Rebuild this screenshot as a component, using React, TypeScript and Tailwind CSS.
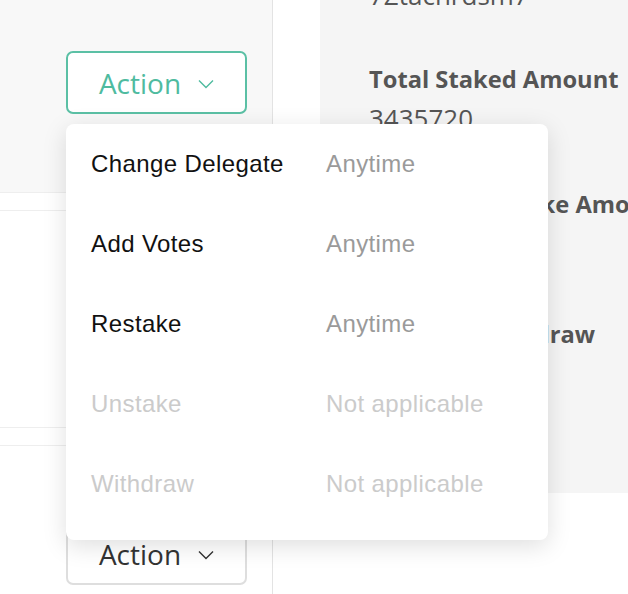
import React from "react";

const items = [
  { label: "Change Delegate", when: "Anytime", enabled: true },
  { label: "Add Votes", when: "Anytime", enabled: true },
  { label: "Restake", when: "Anytime", enabled: true },
  { label: "Unstake", when: "Not applicable", enabled: false },
  { label: "Withdraw", when: "Not applicable", enabled: false },
];

function Chevron({ className }: { className: string }) {
  return (
    <svg viewBox="0 0 16 10" className={className} fill="none" stroke="currentColor" strokeWidth="1.4">
      <path d="M1 1.5 L8 8.5 L15 1.5" />
    </svg>
  );
}

function ActionButton({ active }: { active?: boolean }) {
  return (
    <button
      className={
        active
          ? "flex h-[63px] w-[181px] items-center justify-center gap-[17px] rounded-[7px] border-2 border-[#5bc0a5] bg-white text-[#4fbb9f]"
          : "flex h-[63px] w-[181px] items-center justify-center gap-[17px] rounded-[7px] border-2 border-[#dedede] bg-white text-[#333]"
      }
    >
      <span className="font-['Open_Sans',sans-serif] text-[28px] leading-none">Action</span>
      <Chevron className="mt-[2px] h-[10px] w-[16px]" />
    </button>
  );
}

function Card({ active, first }: { active?: boolean; first?: boolean }) {
  return (
    <div
      className={
        (first ? "-mt-[25px] " : "mt-[17px] border-t border-[#e3e3e3] ") +
        (active ? "bg-[#f8f8f8] " : "bg-white ") +
        "h-[218px] border-b border-[#eeeeee] pl-[66px] pt-[76px]"
      }
    >
      <ActionButton active={active} />
    </div>
  );
}

function Stat({ label, value, className }: { label: string; value: string; className?: string }) {
  return (
    <div className={className}>
      <div className="h-[32px] font-['Open_Sans',sans-serif] text-[23.7px] font-bold leading-[32px] text-[#555]">{label}</div>
      <div className="mt-[6px] h-[34px] font-['Open_Sans',sans-serif] text-[26px] leading-[34px] text-[#555]">{value}</div>
    </div>
  );
}

export default function App() {
  return (
    <div className="relative flex h-[594px] w-[628px] overflow-hidden bg-white">
      <div className="w-[273px] shrink-0 border-r border-[#e3e3e3]">
        <Card active first />
        <Card />
        <Card />
      </div>

      <div className="ml-[47px] h-[493px] w-[308px] shrink-0 overflow-hidden whitespace-nowrap bg-[#f5f5f5] pl-[49px]">
        <div className="-mt-[22px] h-[34px] font-['Open_Sans',sans-serif] text-[26px] leading-[34px] text-[#555]">7Ztachrdsm7</div>
        <Stat className="mt-[51px]" label="Total Staked Amount" value="3435720" />
        <Stat className="mt-[53px]" label="Pending Unstake Amount" value="0" />
        <Stat className="mt-[58px]" label="Ready to Withdraw" value="0" />
      </div>

      <div className="absolute left-[66px] top-[124px] w-[482px] rounded-[8px] bg-white pb-[16px] shadow-[0_6px_24px_rgba(0,0,0,0.13)]">
        {items.map((it) => (
          <div
            key={it.label}
            className="flex h-[80px] items-center font-['Liberation_Sans',Arial,sans-serif] text-[24px] tracking-[0.4px]"
          >
            <span className={"w-[260px] pl-[25px] " + (it.enabled ? "text-[#111]" : "text-[#cbcbcb]")}>{it.label}</span>
            <span className={it.enabled ? "text-[#9a9a9a]" : "text-[#cbcbcb]"}>{it.when}</span>
          </div>
        ))}
      </div>
    </div>
  );
}
